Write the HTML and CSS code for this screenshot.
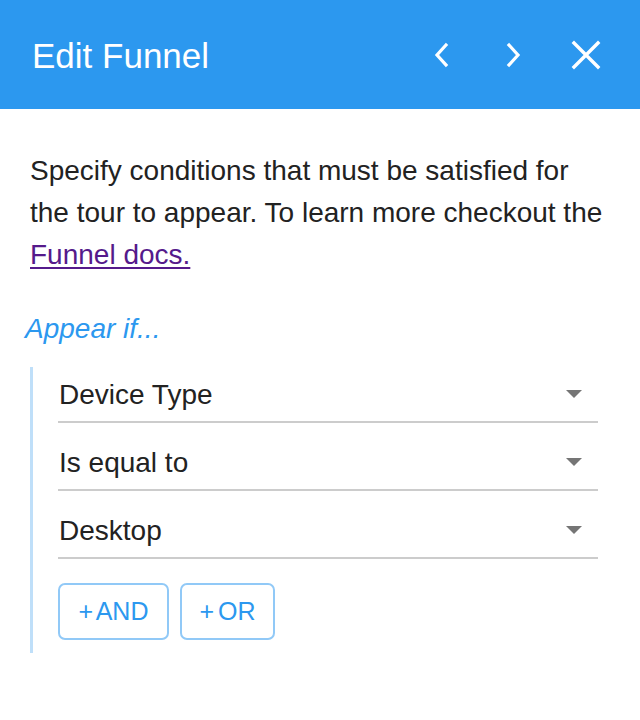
FILE: index.html
```html
<!DOCTYPE html>
<html>
<head>
<meta charset="utf-8">
<link rel="stylesheet" href="styles.css">
</head>
<body>
<div class="panel">
  <header class="header">
    <h1 class="title">Edit Funnel</h1>
    <div class="actions">
      <button class="icon-btn icon-prev" aria-label="Previous">
        <svg width="20" height="26" viewBox="0 0 20 26"><path d="M14 3 L5 13 L14 23" fill="none" stroke="#fff" stroke-width="3.2" stroke-linecap="square"/></svg>
      </button>
      <button class="icon-btn icon-next" aria-label="Next">
        <svg width="20" height="26" viewBox="0 0 20 26"><path d="M6 3 L15 13 L6 23" fill="none" stroke="#fff" stroke-width="3.2" stroke-linecap="square"/></svg>
      </button>
      <button class="icon-btn" aria-label="Close">
        <svg width="30" height="30" viewBox="0 0 30 30"><path d="M3 3 L27 27 M27 3 L3 27" fill="none" stroke="#fff" stroke-width="3.4" stroke-linecap="square"/></svg>
      </button>
    </div>
  </header>
  <main class="content">
    <p class="intro">Specify conditions that must be satisfied for the tour to appear. To learn more checkout the <a class="doc-link" href="#">Funnel docs.</a></p>
    <h2 class="appear">Appear if...</h2>
    <div class="group">
      <div class="select"><span class="select-value">Device Type</span><span class="caret"></span></div>
      <div class="select"><span class="select-value">Is equal to</span><span class="caret"></span></div>
      <div class="select"><span class="select-value">Desktop</span><span class="caret"></span></div>
      <div class="btn-row">
        <button class="add-btn add-and">+ AND</button>
        <button class="add-btn add-or">+ OR</button>
      </div>
    </div>
  </main>
</div>
</body>
</html>
```
FILE: styles.css
```css
* { box-sizing: border-box; }
html, body {
  margin: 0;
  padding: 0;
  background: #fff;
  font-family: "Liberation Sans", Arial, sans-serif;
}
.panel {
  width: 640px;
}
.header {
  height: 109px;
  background: #2c98ef;
  display: flex;
  align-items: center;
  justify-content: space-between;
  padding: 0 39px 0 32px;
}
.title {
  margin: 0;
  color: #fff;
  font-weight: normal;
  font-size: 35px;
  line-height: 40px;
  padding-top: 2px;
}
.actions {
  display: flex;
  align-items: center;
}
.icon-btn {
  background: none;
  border: none;
  padding: 0;
  margin: 0;
  display: flex;
  align-items: center;
  justify-content: center;
  cursor: pointer;
}
.icon-prev { margin-right: 51px; }
.icon-next { margin-right: 48px; }
.content {
  padding: 41px 0 40px 0;
}
.intro {
  margin: 0 0 32px;
  padding: 0 30px;
  font-size: 28px;
  line-height: 42px;
  color: #222;
}
.doc-link {
  color: #551a8b;
  text-decoration: underline;
  text-underline-offset: 3px;
  text-decoration-thickness: 2px;
}
.appear {
  margin: 0 0 17px;
  padding-left: 25px;
  font-size: 28px;
  line-height: 42px;
  font-weight: normal;
  font-style: italic;
  color: #2c98ef;
}
.group {
  margin-left: 30px;
  border-left: 3px solid #bfdff9;
  padding: 0 42px 13px 25px;
}
.select {
  display: flex;
  align-items: center;
  justify-content: space-between;
  padding: 7px 16px 5px 1px;
  border-bottom: 2px solid #cccccc;
  margin-bottom: 12px;
}
.select-value {
  font-size: 28px;
  line-height: 42px;
  color: #222;
}
.caret {
  width: 0;
  height: 0;
  border-left: 8.5px solid transparent;
  border-right: 8.5px solid transparent;
  border-top: 8.5px solid #757575;
  margin-top: -3px;
}
.btn-row {
  display: flex;
  gap: 11px;
  margin-top: 24px;
}
.add-btn {
  height: 57px;
  background: #fff;
  border: 2px solid #91c9f7;
  border-radius: 7px;
  color: #2c98ef;
  font-family: "Liberation Sans", Arial, sans-serif;
  font-size: 25px;
  word-spacing: -3px;
  padding: 0;
  display: flex;
  align-items: center;
  justify-content: center;
  cursor: pointer;
}
.add-and { width: 111px; }
.add-or { width: 95px; }
```
